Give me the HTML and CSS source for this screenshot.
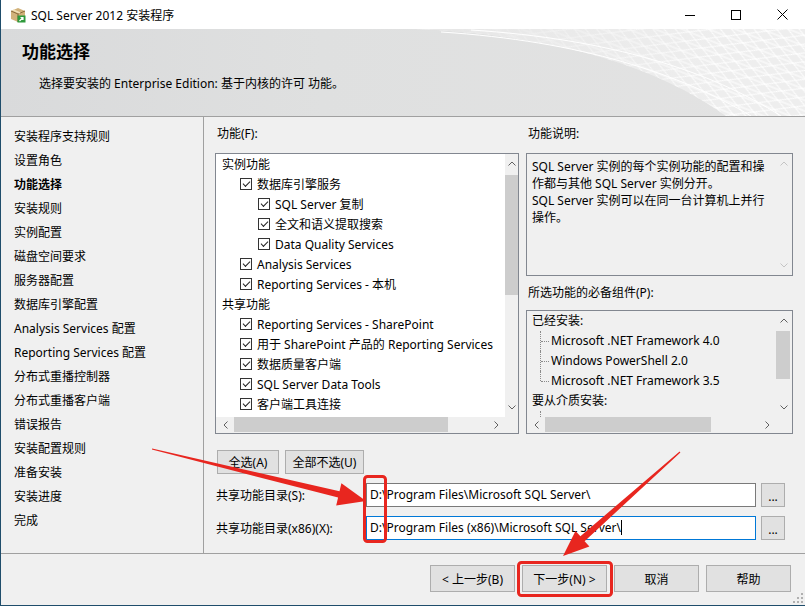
FILE: index.html
```html
<!DOCTYPE html>
<html lang="zh-CN">
<head>
    <meta charset="UTF-8">
    <title>SQL Server 2012 安装程序</title>
    <link rel="stylesheet" href="styles.css">
</head>
<body>
    <div class="window">
        <div class="titlebar">
            <svg class="app-icon" width="16" height="16" viewBox="0 0 16 16">
                <path d="M1 4 L8 1 L15 4 L15 12 L8 15 L1 12 Z" fill="#d2b27a"/>
                <path d="M1 4 L8 7 L15 4 M8 7 V15" stroke="#8a6a3a" fill="none"/>
                <path d="M3 3 L10 6" stroke="#f3e2b8" stroke-width="1.5"/>
                <rect x="7.5" y="8.5" width="8" height="7" fill="#2f9a3c"/>
                <path d="M9.5 14 L13 10.5 M10.5 10.5 H13 V13" stroke="#fff" stroke-width="1.2" fill="none"/>
            </svg>
            <span class="title">SQL Server 2012 安装程序</span>
            <div class="caption">
                <span class="cap-btn"><svg width="10" height="10"><path d="M0 5.5 H11" stroke="#000"/></svg></span>
                <span class="cap-btn"><svg width="10" height="10"><rect x="0.5" y="0.5" width="9" height="9" fill="none" stroke="#000"/></svg></span>
                <span class="cap-btn"><svg width="11" height="11"><path d="M0.5 0.5 L10.5 10.5 M10.5 0.5 L0.5 10.5" stroke="#000"/></svg></span>
            </div>
        </div>

        <div class="banner">
            <svg class="banner-art" width="804" height="87" viewBox="0 0 804 87">
                <defs>
                    <pattern id="mesh" width="18" height="10" patternUnits="userSpaceOnUse" patternTransform="rotate(22)">
                        <path d="M0 0 L18 10 M18 0 L0 10 M0 5 H18" stroke="#fff" stroke-width="1" fill="none"/>
                    </pattern>
                    <linearGradient id="fade" x1="415" y1="0" x2="720" y2="0" gradientUnits="userSpaceOnUse">
                        <stop offset="0" stop-color="#e6e6e6" stop-opacity="1"/>
                        <stop offset="1" stop-color="#e6e6e6" stop-opacity="0"/>
                    </linearGradient>
                </defs>
                <path d="M415 0 C560 6 660 40 725 87 L804 87 L804 0 Z" fill="#eeeeee"/>
                <path d="M415 0 C560 6 660 40 725 87 L804 87 L804 0 Z" fill="url(#mesh)"/>
                <path d="M415 0 C560 6 660 40 725 87 L804 87 L804 0 Z" fill="url(#fade)"/>
                <path d="M440 3 C580 12 680 45 750 87 M470 1 C610 10 710 42 780 87" stroke="#fff" fill="none"/>
            </svg>
            <h1>功能选择</h1>
            <p>选择要安装的 Enterprise Edition: 基于内核的许可 功能。</p>
        </div>

        <div class="main">
            <ul class="steps">
                <li>安装程序支持规则</li>
                <li>设置角色</li>
                <li class="current">功能选择</li>
                <li>安装规则</li>
                <li>实例配置</li>
                <li>磁盘空间要求</li>
                <li>服务器配置</li>
                <li>数据库引擎配置</li>
                <li>Analysis Services 配置</li>
                <li>Reporting Services 配置</li>
                <li>分布式重播控制器</li>
                <li>分布式重播客户端</li>
                <li>错误报告</li>
                <li>安装配置规则</li>
                <li>准备安装</li>
                <li>安装进度</li>
                <li>完成</li>
            </ul>

            <div class="content">
                <div class="panes">
                    <div class="pane">
                        <div class="label">功能(F):</div>
                        <div class="listbox features">
                            <div class="list-view">
                                <div class="row l0">实例功能</div>
                                <div class="row l1"><span class="cb"></span>数据库引擎服务</div>
                                <div class="row l2"><span class="cb"></span>SQL Server 复制</div>
                                <div class="row l2"><span class="cb"></span>全文和语义提取搜索</div>
                                <div class="row l2"><span class="cb"></span>Data Quality Services</div>
                                <div class="row l1"><span class="cb"></span>Analysis Services</div>
                                <div class="row l1"><span class="cb"></span>Reporting Services - 本机</div>
                                <div class="row l0">共享功能</div>
                                <div class="row l1"><span class="cb"></span>Reporting Services - SharePoint</div>
                                <div class="row l1"><span class="cb"></span>用于 SharePoint 产品的 Reporting Services</div>
                                <div class="row l1"><span class="cb"></span>数据质量客户端</div>
                                <div class="row l1"><span class="cb"></span>SQL Server Data Tools</div>
                                <div class="row l1"><span class="cb"></span>客户端工具连接</div>
                            </div>
                            <div class="vscroll">
                                <span class="arrow"><svg width="8" height="5"><path d="M0.5 4.5 L4 1 L7.5 4.5" stroke="#606060" fill="none"/></svg></span>
                                <span class="thumb feat-vthumb"></span>
                                <span class="spacer"></span>
                                <span class="arrow"><svg width="8" height="5"><path d="M0.5 0.5 L4 4 L7.5 0.5" stroke="#606060" fill="none"/></svg></span>
                            </div>
                            <div class="hscroll">
                                <span class="harrow"><svg width="5" height="8"><path d="M4.5 0.5 L1 4 L4.5 7.5" stroke="#606060" fill="none"/></svg></span>
                                <span class="thumb feat-hthumb"></span>
                                <span class="spacer"></span>
                                <span class="harrow"><svg width="5" height="8"><path d="M0.5 0.5 L4 4 L0.5 7.5" stroke="#606060" fill="none"/></svg></span>
                            </div>
                            <div class="corner"></div>
                        </div>
                    </div>

                    <div class="pane">
                        <div class="label">功能说明:</div>
                        <div class="listbox desc">
                            <div class="desc-text">
                                SQL Server 实例的每个实例功能的配置和操<br>
                                作都与其他 SQL Server 实例分开。<br>
                                SQL Server 实例可以在同一台计算机上并行<br>
                                操作。
                            </div>
                            <div class="vscroll faded">
                                <span class="arrow"><svg width="8" height="5"><path d="M0.5 4.5 L4 1 L7.5 4.5" stroke="#c4c4c4" fill="none"/></svg></span>
                                <span class="spacer"></span>
                                <span class="arrow"><svg width="8" height="5"><path d="M0.5 0.5 L4 4 L7.5 0.5" stroke="#c4c4c4" fill="none"/></svg></span>
                            </div>
                        </div>

                        <div class="label label-gap">所选功能的必备组件(P):</div>
                        <div class="listbox prereq">
                            <div class="list-view">
                                <div class="tree-head">已经安装:</div>
                                <div class="leaf">Microsoft .NET Framework 4.0</div>
                                <div class="leaf">Windows PowerShell 2.0</div>
                                <div class="leaf last">Microsoft .NET Framework 3.5</div>
                                <div class="tree-head">要从介质安装:</div>
                                <div class="leaf"></div>
                            </div>
                            <div class="vscroll">
                                <span class="arrow"><svg width="8" height="5"><path d="M0.5 4.5 L4 1 L7.5 4.5" stroke="#606060" fill="none"/></svg></span>
                                <span class="thumb pre-vthumb"></span>
                                <span class="spacer"></span>
                                <span class="arrow"><svg width="8" height="5"><path d="M0.5 0.5 L4 4 L7.5 0.5" stroke="#606060" fill="none"/></svg></span>
                            </div>
                            <div class="hscroll">
                                <span class="harrow"><svg width="5" height="8"><path d="M4.5 0.5 L1 4 L4.5 7.5" stroke="#606060" fill="none"/></svg></span>
                                <span class="thumb pre-hthumb"></span>
                                <span class="spacer"></span>
                                <span class="harrow"><svg width="5" height="8"><path d="M0.5 0.5 L4 4 L0.5 7.5" stroke="#606060" fill="none"/></svg></span>
                            </div>
                            <div class="corner"></div>
                        </div>
                    </div>
                </div>

                <div class="select-btns">
                    <button class="btn-all">全选(A)</button>
                    <button class="btn-none">全部不选(U)</button>
                </div>

                <div class="path-row">
                    <span class="path-label">共享功能目录(S):</span>
                    <div class="textbox">D:\Program Files\Microsoft SQL Server\</div>
                    <button class="browse">...</button>
                </div>
                <div class="path-row">
                    <span class="path-label">共享功能目录(x86)(X):</span>
                    <div class="textbox focused">D:\Program Files (x86)\Microsoft SQL Server\<span class="caret"></span></div>
                    <button class="browse">...</button>
                </div>
            </div>
        </div>

        <div class="footer">
            <button>&lt; 上一步(B)</button>
            <button>下一步(N) &gt;</button>
            <button>取消</button>
            <button>帮助</button>
            <svg class="grip" width="10" height="10" viewBox="0 0 10 10">
                <g fill="#b0b0b0">
                    <rect x="8" y="0" width="2" height="2"/>
                    <rect x="4" y="4" width="2" height="2"/><rect x="8" y="4" width="2" height="2"/>
                    <rect x="0" y="8" width="2" height="2"/><rect x="4" y="8" width="2" height="2"/><rect x="8" y="8" width="2" height="2"/>
                </g>
            </svg>
        </div>

        <!-- red markup drawn over the screenshot -->
        <svg class="annotations" width="805" height="606" viewBox="0 0 805 606">
            <g fill="#e8261f">
                <polygon points="152.1,448.4 339.5,491.2 341.4,483.2 366,501 336.2,505.6 338.1,497.6 151.9,449.6"/>
                <polygon points="679.6,451.6 580.4,536.2 575.5,530.9 563,556 589.4,546.5 584.6,541.2 680.4,452.4"/>
            </g>
            <g fill="none" stroke="#e8261f" stroke-width="3">
                <rect x="364.5" y="476.5" width="21" height="65" rx="3"/>
                <rect x="518.5" y="562.5" width="93" height="33" rx="3"/>
            </g>
        </svg>
    </div>
</body>
</html>
```

FILE: styles.css
```css
* {
    box-sizing: border-box;
}

body {
    margin: 0;
    background: #fff;
    font-family: "Noto Sans", "Noto Sans CJK SC", sans-serif;
    font-size: 12px;
    color: #000;
}

.window {
    position: relative;
    width: 805px;
    height: 606px;
    background: #f0f0f0;
    border-left: 1px solid #1f4d6b;
    border-bottom: 1px solid #1f4d6b;
    display: flex;
    flex-direction: column;
    overflow: hidden;
}

/* title bar */
.titlebar {
    height: 29px;
    flex-shrink: 0;
    background: #fff;
    display: flex;
    align-items: center;
}

.app-icon {
    margin-left: 9px;
}

.title {
    margin-left: 5px;
}

.caption {
    margin-left: auto;
    display: flex;
    height: 29px;
}

.cap-btn {
    width: 46px;
    display: flex;
    align-items: center;
    justify-content: center;
}

/* banner */
.banner {
    position: relative;
    height: 88px;
    flex-shrink: 0;
    border-bottom: 1px solid #a0a0a0;
    background: linear-gradient(to right, #d9dadb, #dfe0e0 40%, #e3e3e3);
    padding: 11px 0 0 21px;
}

.banner-art {
    position: absolute;
    top: 0;
    left: 0;
}

.banner h1 {
    position: relative;
    margin: 0;
    font-size: 17px;
    line-height: 24px;
    font-weight: bold;
}

.banner p {
    position: relative;
    margin: 11px 0 0 17px;
    line-height: 17px;
}

/* main area */
.main {
    display: flex;
    height: 436px;
    flex-shrink: 0;
}

.steps {
    list-style: none;
    margin: 0;
    padding: 8px 0 0 13px;
    width: 203px;
    flex-shrink: 0;
    border-right: 1px solid #a0a0a0;
}

.steps li {
    line-height: 24px;
}

.steps .current {
    font-weight: bold;
}

.content {
    flex: 1;
    padding: 8px 12px 0 11px;
}

.panes {
    display: grid;
    grid-template-columns: 304px 1fr;
    column-gap: 7px;
}

.label {
    line-height: 18px;
    margin-bottom: 10px;
    padding-left: 2px;
}

.label-gap {
    margin-top: 8px;
    margin-bottom: 8px;
}

.listbox {
    border: 1px solid #828790;
    display: grid;
    overflow: hidden;
}

.features {
    height: 281px;
    background: #fff;
    grid-template-columns: minmax(0, 1fr) 13px;
    grid-template-rows: minmax(0, 1fr) 16px;
}

.list-view {
    overflow: hidden;
    white-space: nowrap;
    min-height: 0;
}

.row {
    height: 20px;
    display: flex;
    align-items: center;
}

.l0 {
    padding-left: 6px;
}

.l1 {
    padding-left: 24px;
}

.l2 {
    padding-left: 42px;
}

.cb {
    position: relative;
    width: 12px;
    height: 12px;
    flex-shrink: 0;
    margin-right: 5px;
    border: 1px solid #333;
    background: #fff;
}

.cb::after {
    content: '';
    position: absolute;
    left: 2px;
    top: 2px;
    width: 6px;
    height: 3px;
    border-left: 1px solid #222;
    border-bottom: 1px solid #222;
    transform: rotate(-45deg);
}

/* scrollbars */
.vscroll {
    display: flex;
    flex-direction: column;
    background: #f0f0f0;
    min-height: 0;
}

.hscroll {
    display: flex;
    background: #f0f0f0;
}

.arrow {
    height: 19px;
    display: flex;
    align-items: center;
    justify-content: center;
}

.harrow {
    width: 18px;
    display: flex;
    align-items: center;
    justify-content: center;
}

.spacer {
    flex: 1;
}

.thumb {
    background: #cdcdcd;
}

.feat-vthumb {
    margin-top: 2px;
    height: 120px;
}

.feat-hthumb {
    width: 214px;
    margin-bottom: 1px;
}

.corner {
    background: #f0f0f0;
}

/* description box */
.desc {
    height: 123px;
    grid-template-columns: minmax(0, 1fr) 16px;
}

.desc-text {
    padding: 4px 0 0 5px;
    line-height: 17px;
    white-space: nowrap;
    overflow: hidden;
}

.vscroll.faded {
    background: none;
}

/* prerequisites box */
.prereq {
    height: 124px;
    grid-template-columns: minmax(0, 1fr) 16px;
    grid-template-rows: minmax(0, 1fr) 16px;
}

.tree-head {
    height: 20px;
    line-height: 20px;
    padding-left: 5px;
}

.leaf {
    position: relative;
    height: 20px;
    line-height: 20px;
    padding-left: 24px;
}

.leaf::before {
    content: '';
    position: absolute;
    left: 13px;
    top: 0;
    height: 20px;
    border-left: 1px dotted #8a8a8a;
}

.leaf::after {
    content: '';
    position: absolute;
    left: 14px;
    top: 10px;
    width: 8px;
    border-top: 1px dotted #8a8a8a;
}

.leaf.last::before {
    height: 10px;
}

.pre-vthumb {
    margin-top: 1px;
    height: 48px;
    margin-right: 2px;
}

.pre-hthumb {
    width: 166px;
    margin-bottom: 1px;
}

/* buttons + paths */
button {
    font-family: inherit;
    font-size: 12px;
    color: #000;
    background: #e1e1e1;
    border: 1px solid #adadad;
    padding: 0;
}

.select-btns {
    display: flex;
    gap: 6px;
    margin-top: 16px;
    padding-left: 2px;
}

.btn-all {
    width: 62px;
    height: 24px;
}

.btn-none {
    width: 79px;
    height: 24px;
}

.path-row {
    display: flex;
    align-items: center;
    margin-top: 9px;
}

.path-label {
    width: 151px;
    padding-left: 1px;
}

.textbox {
    width: 390px;
    height: 24px;
    line-height: 22px;
    padding-left: 3px;
    background: #fff;
    border: 1px solid #7a7a7a;
    white-space: nowrap;
}

.textbox.focused {
    border-color: #0078d7;
}

.caret {
    display: inline-block;
    width: 1px;
    height: 15px;
    background: #000;
    vertical-align: -3px;
}

.browse {
    width: 24px;
    height: 24px;
    margin-left: 5px;
    line-height: 26px;
}

/* footer */
.footer {
    position: relative;
    flex: 1;
    border-top: 1px solid #a0a0a0;
    display: flex;
    justify-content: flex-end;
    gap: 7px;
    padding: 11px 14px 0 0;
}

.footer button {
    width: 85px;
    height: 27px;
}

.grip {
    position: absolute;
    right: 2px;
    bottom: 2px;
}

.annotations {
    position: absolute;
    top: 0;
    left: -1px;
    pointer-events: none;
}
```
